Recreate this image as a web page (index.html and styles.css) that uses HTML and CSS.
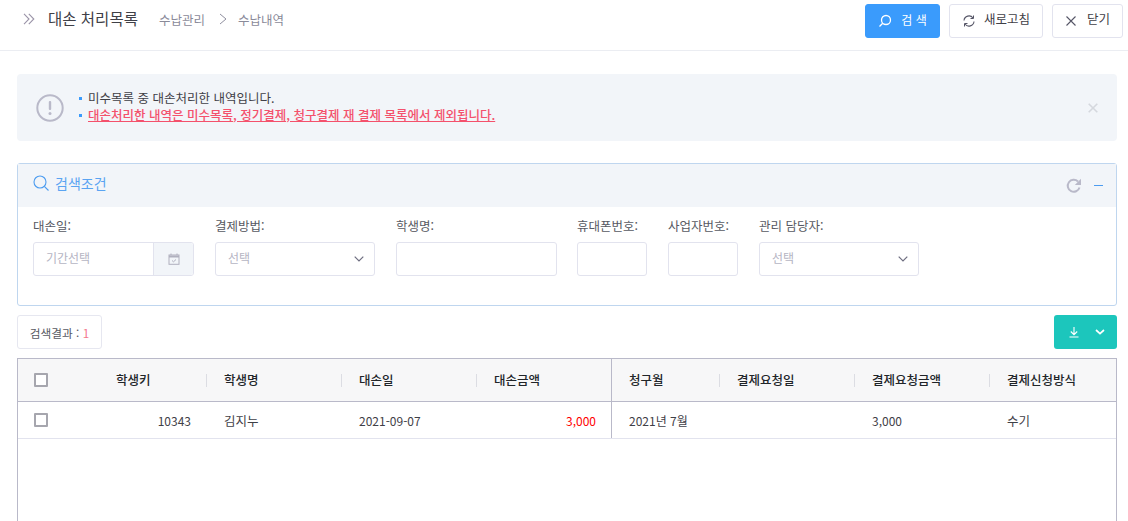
FILE: index.html
```html
<!DOCTYPE html>
<html lang="ko">
<head>
<meta charset="utf-8">
<title>대손 처리목록</title>
<link rel="stylesheet" href="styles.css">
</head>
<body>
<header class="topbar">
  <div class="crumbs">
    <svg class="ic-dbl" width="12" height="12" viewBox="0 0 12 12"><path d="M1 .8 6 6l-5 5.200M5.800.8 10.800 6l-5 5.200" fill="none" stroke="#9b94a8" stroke-width="1.100"/></svg>
    <h1 class="title">대손 처리목록</h1>
    <span class="crumb">수납관리</span>
    <svg class="ic-sep" width="8" height="12" viewBox="0 0 8 12"><path d="M1 1l6 5-6 5" fill="none" stroke="#8f8f9f" stroke-width="1"/></svg>
    <span class="crumb">수납내역</span>
  </div>
  <div class="actions">
    <button class="btn btn-primary btn-search"><svg width="14" height="14" viewBox="0 0 14 14"><circle cx="8" cy="6" r="4.500" fill="none" stroke="#fff" stroke-width="1.300"/><path d="M4.700 9.300 1.500 12.500" stroke="#fff" stroke-width="1.300"/></svg><span class="wide">검 색</span></button>
    <button class="btn btn-refresh"><svg width="14" height="14" viewBox="0 0 14 14"><path d="M2 6.500A5 5 0 0 1 11 4M12 7.500A5 5 0 0 1 3 10" fill="none" stroke="#555566" stroke-width="1.100"/><path d="M11.500 1.500V4.500H8.500M2.500 12.500V9.500H5.500" fill="none" stroke="#555566" stroke-width="1"/></svg><span>새로고침</span></button>
    <button class="btn btn-close"><svg width="12" height="12" viewBox="0 0 12 12"><path d="M1.500 1.500l9 9M10.500 1.500l-9 9" stroke="#555566" stroke-width="1.100"/></svg><span>닫기</span></button>
  </div>
</header>

<main class="content">
  <section class="alert">
    <svg class="alert-icon" width="28" height="28" viewBox="0 0 28 28"><circle cx="14" cy="14" r="12.700" fill="none" stroke="#b9b9c9" stroke-width="2"/><rect x="12.800" y="7" width="2.400" height="9" rx="1" fill="#b9b9c9"/><circle cx="14" cy="19.500" r="1.500" fill="#b9b9c9"/></svg>
    <ul class="alert-list">
      <li>미수목록 중 대손처리한 내역입니다.</li>
      <li class="danger">대손처리한 내역은 미수목록, 정기결제, 청구결제 재 결제 목록에서 제외됩니다.</li>
    </ul>
    <svg class="alert-x" width="10" height="10" viewBox="0 0 10 10"><path d="M.7.7l8.600 8.600M9.300.7.7 9.300" stroke="#d5d8de" stroke-width="1.600"/></svg>
  </section>

  <section class="panel">
    <div class="panel-head">
      <div class="panel-title">
        <svg width="16" height="16" viewBox="0 0 16 16"><circle cx="7" cy="7" r="6" fill="none" stroke="#4d9cf0" stroke-width="1.100"/><path d="M11.300 11.300 15.500 15.500" stroke="#4d9cf0" stroke-width="1.100"/></svg>
        <span>검색조건</span>
      </div>
      <div class="panel-tools">
        <svg width="16" height="16" viewBox="0 0 16 16"><path d="M13.500 9.500A6 6 0 1 1 12 3.500" fill="none" stroke="#b9b9c9" stroke-width="2"/><path d="M15 .8v6.200H8.800z" fill="#b9b9c9"/></svg>
        <i class="minus"></i>
      </div>
    </div>
    <div class="fields">
      <div class="field f-date">
        <label>대손일:</label>
        <div class="box date"><span class="ph">기간선택</span><span class="addon"><svg width="12" height="12" viewBox="0 0 12 12"><rect x="1" y="2" width="10" height="9.300" fill="none" stroke="#b0b0be" stroke-width="1"/><path d="M1 3.500h10" stroke="#b0b0be" stroke-width="2"/><path d="M3 .5v1.500M9 .5v1.500" stroke="#b0b0be"/><path d="M4 7.500l1.500 1.300L8 6.500" fill="none" stroke="#b0b0be"/></svg></span></div>
      </div>
      <div class="field f-sel">
        <label>결제방법:</label>
        <div class="box select"><span class="ph">선택</span><svg width="10" height="6" viewBox="0 0 10 6"><path d="M.7.700 5 5 9.300.700" fill="none" stroke="#6e6e80" stroke-width="1.200"/></svg></div>
      </div>
      <div class="field f-name">
        <label>학생명:</label>
        <div class="box"></div>
      </div>
      <div class="field f-small">
        <label>휴대폰번호:</label>
        <div class="box"></div>
      </div>
      <div class="field f-small">
        <label>사업자번호:</label>
        <div class="box"></div>
      </div>
      <div class="field f-sel">
        <label>관리 담당자:</label>
        <div class="box select"><span class="ph">선택</span><svg width="10" height="6" viewBox="0 0 10 6"><path d="M.7.700 5 5 9.300.700" fill="none" stroke="#6e6e80" stroke-width="1.200"/></svg></div>
      </div>
    </div>
  </section>

  <div class="toolbar">
    <div class="count">검색결과 : <b>1</b></div>
    <button class="btn-excel">
      <svg width="12" height="12" viewBox="0 0 12 12"><path d="M6 1v7.500M2.800 5.500 6 8.700l3.200-3.200M1.500 11h9" fill="none" stroke="#fff" stroke-width="1.100"/></svg>
      <svg width="10" height="6" viewBox="0 0 10 6"><path d="M1 1l4 3.600L9 1" fill="none" stroke="#fff" stroke-width="1.700"/></svg>
    </button>
  </div>

  <section class="grid">
    <div class="row head">
      <div class="cell chk"><i class="check"></i></div>
      <div class="cell key"><span>학생키</span></div>
      <div class="cell sep"><span>학생명</span></div>
      <div class="cell sep"><span>대손일</span></div>
      <div class="cell sep"><span>대손금액</span></div>
      <div class="cell frozen"><span>청구월</span></div>
      <div class="cell sep"><span>결제요청일</span></div>
      <div class="cell sep"><span>결제요청금액</span></div>
      <div class="cell sep"><span>결제신청방식</span></div>
    </div>
    <div class="row body">
      <div class="cell chk"><i class="check"></i></div>
      <div class="cell num digits">10343</div>
      <div class="cell">김지누</div>
      <div class="cell digits">2021-09-07</div>
      <div class="cell num digits red">3,000</div>
      <div class="cell frozen digits">2021년 7월</div>
      <div class="cell"></div>
      <div class="cell digits">3,000</div>
      <div class="cell">수기</div>
    </div>
  </section>
</main>
</body>
</html>
```
FILE: styles.css
```css
* { box-sizing: border-box; }
html, body { margin: 0; height: 521px; overflow: hidden; background: #fff; }
body { font-family: "Noto Sans CJK KR", "Noto Sans", sans-serif; font-size: 12.5px; color: #3f4047; }
ul { margin: 0; padding: 0; list-style: none; }
button { font-family: inherit; cursor: pointer; }

.topbar { height: 51px; border-bottom: 1px solid #ebedf2; display: flex; justify-content: space-between; padding: 4px 5px 0 23px; }
.crumbs { display: flex; align-items: center; height: 30px; }
.ic-dbl { margin-right: 13px; }
.title { margin: 0 21px 0 0; font-size: 15.5px; font-weight: 400; color: #3f4047; position: relative; top: -1px; }
.crumb { color: #8a8a99; font-size: 12.5px; }
.ic-sep { margin: 0 11px 0 14px; }
.actions { display: flex; gap: 9px; }
.btn { height: 34px; display: flex; align-items: center; justify-content: center; gap: 8px; border: 1px solid #e2e3ee; border-radius: 3px; background: #fff; color: #3f4047; font-size: 12.5px; padding: 0; }
.btn span { position: relative; top: -3px; }
.btn-primary { background: #3a9bfc; border-color: #3a9bfc; color: #fff; }
.btn-search { width: 75px; gap: 9px; font-size: 12px; }
.btn-search span.wide { top: -2px; }
.btn-refresh { width: 94px; }
.btn-close { width: 71px; gap: 10px; }

.content { padding: 23px 11px 0 17px; }

.alert { height: 67px; background: #f2f5f9; border-radius: 4px; display: flex; align-items: center; padding: 0 19px; }
.alert-icon { margin-right: 14px; }
.alert-list { flex: 1; line-height: 17px; color: #3f4047; position: relative; top: -2px; }
.alert-list li { padding-left: 10px; position: relative; }
.alert-list li::before { content: ""; position: absolute; left: 1px; top: 8px; width: 3px; height: 3px; background: #3a9bfc; }
.danger { color: #f4516c; text-decoration: underline; font-weight: 500; }

.panel { margin-top: 22px; height: 143px; border: 1px solid #bfd6ef; border-radius: 3px; }
.panel-head { height: 43px; background: #f2f5f9; display: flex; align-items: center; justify-content: space-between; padding: 0 13px 0 15px; }
.panel-title { display: flex; align-items: center; gap: 6px; color: #5aa4f2; font-size: 14px; margin-bottom: 5px; }
.panel-tools { display: flex; align-items: center; gap: 12px; }
.minus { display: block; width: 9px; height: 1px; background: #4d9cf0; }

.fields { display: flex; gap: 21px; padding: 9px 15px 0; }
.field label { display: block; height: 26px; line-height: 20px; color: #575962; }
.f-date { width: 161px; }
.f-sel { width: 160px; }
.f-name { width: 161px; margin-right: -1px; }
.f-small { width: 70px; }
.box { height: 34px; border: 1px solid #e2e3ee; border-radius: 3px; background: #fff; display: flex; align-items: center; }
.ph { color: #b5b5c3; padding-left: 12px; position: relative; top: -2px; font-size: 12px; }
.select { justify-content: space-between; padding-right: 10px; }
.date { overflow: hidden; justify-content: space-between; }
.addon { width: 40px; height: 100%; background: #f2f5f9; border-left: 1px solid #e2e3ee; display: flex; align-items: center; justify-content: center; }

.toolbar { display: flex; justify-content: space-between; margin-top: 9px; height: 34px; }
.count { width: 85px; border: 1px solid #e6e7f0; border-radius: 3px; display: flex; align-items: center; justify-content: center; color: #575962; font-size: 11.700px; white-space: pre; }
.count b { color: #f4788c; font-weight: 400; }
.btn-excel { width: 63px; border: 0; border-radius: 3px; background: #1cc6bc; display: flex; align-items: center; justify-content: center; gap: 15px; padding: 0 0 0 2px; }

.grid { margin-top: 9px; height: 163px; border: 1px solid #b9b9c9; border-bottom: 0; }
.row { display: grid; grid-template-columns: 81px 107px 135px 135px 135px 108px 135px 135px 1fr; }
.head { height: 43px; background: #f7f7f8; border-bottom: 1px solid #b9b9c9; color: #212529; font-weight: 500; align-items: center; }
.head .cell { display: flex; align-items: center; height: 100%; padding-left: 18px; }
.head .cell > span { position: relative; top: -1px; }
.head .sep { position: relative; }
.head .sep::before { content: ""; position: absolute; left: 0; top: 15px; height: 13px; width: 1px; background: #dcdde3; }
.body { height: 37px; border-bottom: 1px solid #e2e3ee; color: #3f4047; }
.body .cell { display: flex; align-items: center; padding-left: 18px; }
.body .digits { font-size: 12px; }
.head .cell.key { padding-left: 17px; }
.head .cell.frozen, .body .cell.frozen { border-left: 1px solid #b9b9c9; padding-left: 17px; }
.head .cell.chk, .body .cell.chk { padding-left: 16px; }
.body .chk { align-items: flex-start; padding-top: 11px; }
.body .cell.num { justify-content: flex-end; padding-right: 15px; padding-left: 0; }
.body .red { color: #ff0000; }
.check { display: block; width: 14px; height: 14px; border: 2px solid #a6a6ae; border-radius: 1px; background: #fff; }
```
